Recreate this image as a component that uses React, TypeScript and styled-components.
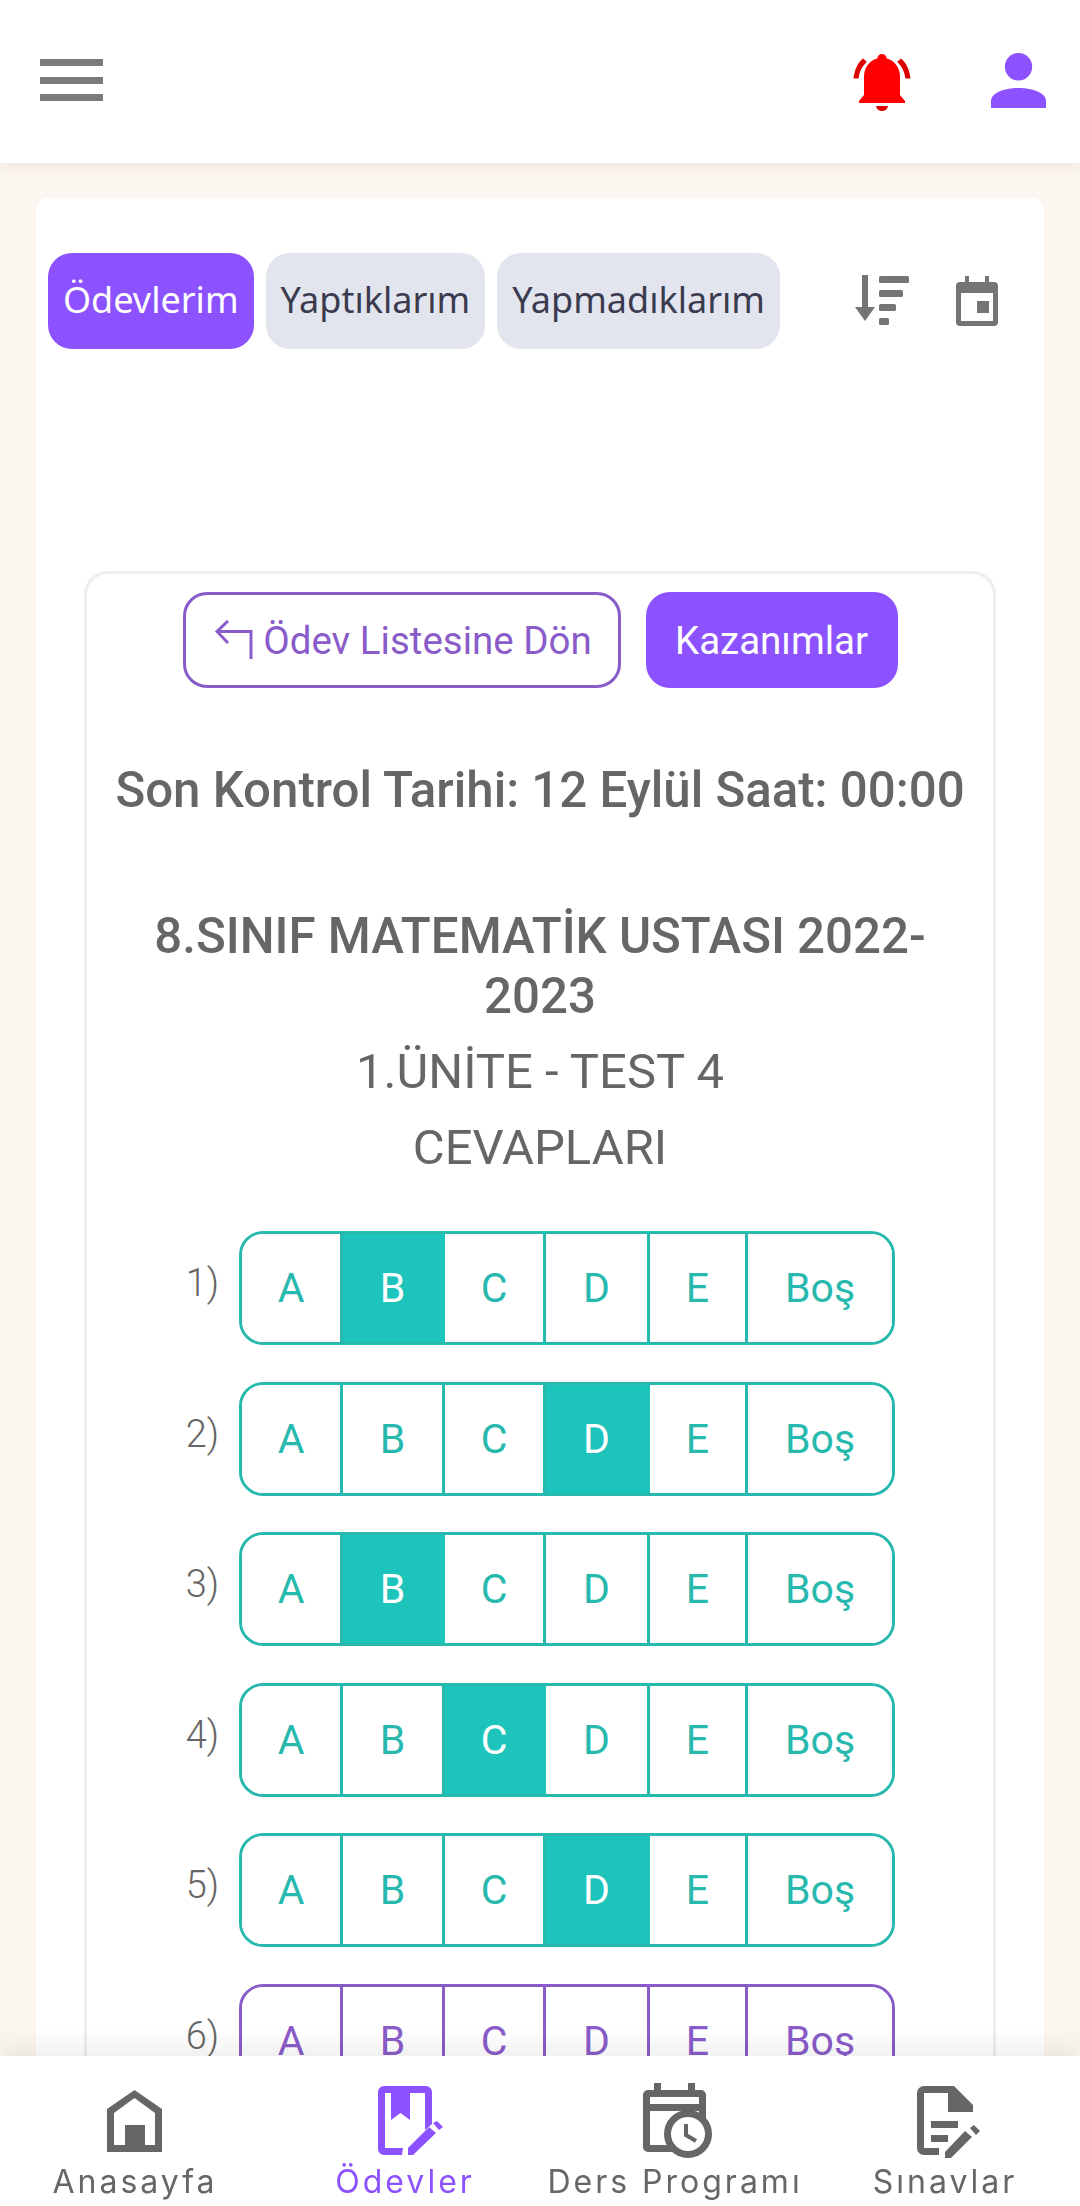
import React from 'react';
import styled, { createGlobalStyle } from 'styled-components';

const purple = '#8c52ff';
const lilac = '#8a5cc9';
const teal = '#27b8ae';
const tealFill = '#1dc4bc';
const grey = '#666666';

const GlobalStyle = createGlobalStyle`
  html, body {
    margin: 0;
    height: 2206px;
    overflow: hidden;
    background: #fcf6f0;
    font-family: Roboto, sans-serif;
  }
`;

const Page = styled.div`
  width: 1080px;
  height: 2206px;
  overflow: hidden;
`;

const Header = styled.header`
  height: 163px;
  background: #ffffff;
  box-shadow: 0 2px 14px rgba(120, 100, 80, 0.12);
  display: flex;
  align-items: center;
  justify-content: space-between;
  padding: 0 34px 0 40px;
`;

const Burger = styled.div`
  width: 63px;
  display: flex;
  flex-direction: column;
  gap: 10.5px;
  margin-bottom: 3px;
`;

const BurgerLine = styled.span`
  height: 7px;
  background: #7a7a7a;
`;

const HeaderIcons = styled.div`
  display: flex;
  align-items: center;
  gap: 75px;
  margin-bottom: 2px;
`;

const MainCard = styled.main`
  margin: 35px 36px 0;
  background: #ffffff;
  border-radius: 12px;
  padding: 55px 12px 0;
  height: 2100px;
`;

const TabBar = styled.div`
  display: flex;
  align-items: center;
  gap: 12px;
`;

const Tab = styled.div<{ $active?: boolean }>`
  box-sizing: border-box;
  height: 96px;
  padding: 0 15px 3px;
  border-radius: 24px;
  display: flex;
  align-items: center;
  font-family: 'Noto Sans', sans-serif;
  font-size: 36px;
  background: ${(p) => (p.$active ? purple : '#e3e5ee')};
  color: ${(p) => (p.$active ? '#ffffff' : '#3b3b4f')};
`;

const TabIcons = styled.div`
  display: flex;
  align-items: center;
  gap: 46px;
  margin-left: 62px;
`;

const InnerCard = styled.section`
  margin: 222px 36px 0;
  border: 3px solid #eeeeee;
  border-radius: 24px;
  padding: 18px 16px 0;
  text-align: center;
  color: ${grey};
  height: 1700px;
`;

const ButtonRow = styled.div`
  display: flex;
  justify-content: center;
  gap: 25px;
`;

const BackButton = styled.div`
  box-sizing: border-box;
  width: 438px;
  height: 96px;
  padding-left: 4px;
  border: 3px solid ${lilac};
  border-radius: 24px;
  color: ${lilac};
  font-size: 38.5px;
  display: flex;
  align-items: center;
  justify-content: center;
  gap: 10px;
`;

const GainsButton = styled.div`
  width: 252px;
  height: 96px;
  border-radius: 24px;
  background: ${purple};
  color: #ffffff;
  font-size: 38.5px;
  display: flex;
  align-items: center;
  justify-content: center;
`;

const Deadline = styled.div`
  margin-top: 72px;
  font-size: 49.2px;
  font-weight: 500;
  line-height: 60px;
`;

const BookTitle = styled.div`
  margin: 86px 40px 0;
  font-size: 49.2px;
  font-weight: 500;
  line-height: 60px;
`;

const SubTitle = styled.div`
  margin-top: 16px;
  font-size: 49px;
  line-height: 60px;
`;

const Rows = styled.div`
  margin-top: 53px;
  display: flex;
  flex-direction: column;
  gap: 36.6px;
`;

const Row = styled.div`
  display: flex;
  align-items: center;
  margin-left: 72px;
`;

const RowLabel = styled.div`
  width: 55px;
  font-size: 38px;
  font-weight: 300;
  text-align: center;
  margin-right: 9px;
  margin-bottom: 10px;
`;

const Choices = styled.div<{ $color: string }>`
  box-sizing: border-box;
  width: 656px;
  height: 114px;
  border: 3px solid ${(p) => p.$color};
  border-radius: 24px;
  overflow: hidden;
  display: flex;
  color: ${(p) => p.$color};
`;

const Choice = styled.div<{ $filled?: boolean; $width: number; $color: string; $fill: string }>`
  box-sizing: border-box;
  flex: 0 0 ${(p) => p.$width}px;
  display: flex;
  align-items: center;
  justify-content: center;
  font-size: 41px;
  border-right: 3px solid ${(p) => (p.$filled ? p.$fill : p.$color)};
  background: ${(p) => (p.$filled ? p.$fill : '#ffffff')};
  color: ${(p) => (p.$filled ? '#ffffff' : p.$color)};
  &:last-child {
    border-right: none;
  }
`;

const BottomNav = styled.nav`
  position: fixed;
  left: 0;
  right: 0;
  bottom: 0;
  height: 150px;
  background: #ffffff;
  box-shadow: 0 -10px 24px rgba(0, 0, 0, 0.07);
  display: flex;
`;

const NavItem = styled.div<{ $active?: boolean }>`
  width: 270px;
  display: flex;
  flex-direction: column;
  align-items: center;
  padding-top: 24px;
  color: ${(p) => (p.$active ? purple : grey)};
`;

const NavLabel = styled.span`
  margin-top: 2px;
  font-family: Inter, sans-serif;
  font-size: 32px;
  letter-spacing: 3px;
  line-height: 40px;
  white-space: nowrap;
`;

const Bell = () => (
  <svg width="68" height="68" viewBox="0 0 68 68" fill="#ff0000">
    <path d="M34 7c2.6 0 4.4 2 4.8 4.6C47 14 52 21 52 30v18l5 6v2H11v-2l5-6V30c0-9 5-16 13.2-18.4C29.6 9 31.4 7 34 7z" />
    <path d="M28 59h12c-.5 3.4-3 5-6 5s-5.500-1.600-6-5z" fill="#dd0000" />
    <path d="M15 11.500l3.800 3.300C14.500 19.500 11.500 24 10.600 31.500H5.500C6.500 23 9.500 16 15 11.500zM53 11.500l-3.800 3.300C53.500 19.500 56.500 24 57.400 31.500h5.100C61.500 23 58.500 16 53 11.500z" fill="#dd0000" />
  </svg>
);

const UserIcon = () => (
  <svg width="55" height="55" viewBox="0 0 55 55" fill={purple}>
    <circle cx="27.5" cy="13.700" r="13.700" />
    <path d="M0 55v-7c0-8 13-13 27.500-13S55 40 55 48v7z" />
  </svg>
);

const SortIcon = () => (
  <svg width="56" height="56" viewBox="0 0 56 56" fill="#757575">
    <rect x="8" y="2" width="6" height="36" />
    <path d="M1 34h20L11 48z" />
    <rect x="25" y="3" width="30" height="7" rx="1.500" />
    <rect x="25" y="17" width="24" height="7" rx="1.500" />
    <rect x="25" y="31" width="17" height="7" rx="1.500" />
    <rect x="25" y="45" width="10" height="7" rx="1.500" />
  </svg>
);

const CalendarIcon = () => (
  <svg width="42" height="50" viewBox="0 0 42 50" fill="#757575">
    <path d="M9 0h4v6h16V0h4v6h5a4 4 0 0 1 4 4v36a4 4 0 0 1-4 4H4a4 4 0 0 1-4-4V10a4 4 0 0 1 4-4h5zM5 17v28h32V17z" />
    <rect x="21" y="25" width="12" height="12" />
  </svg>
);

const BackArrow = () => (
  <svg width="38" height="40" viewBox="0 0 38 40" fill="none" stroke={lilac} strokeWidth="3">
    <path d="M13 1 2 11.500 13 23M2 11.500h34V39" />
  </svg>
);

const HomeIcon = () => (
  <svg width="80" height="80" viewBox="0 0 80 80" fill={grey}>
    <path d="M39.500 10 67 29v43H12V29zM39.500 18 19 33v32h11V45h20v20h10V33z" fillRule="evenodd" />
  </svg>
);

const BookIcon = () => (
  <svg width="80" height="80" viewBox="-5 0 80 80" fill={purple}>
    <path d="M14 6h42a6 6 0 0 1 6 6v32l-7 6V13H15v55h18l-1 7H14a6 6 0 0 1-6-6V12a6 6 0 0 1 6-6z" />
    <path d="M21 13h19v27l-9.500-7L21 40z" />
    <path d="M38 75v-7l21-21 7 6-23 22zM63 43l4-2 6 6-4 3z" />
  </svg>
);

const ScheduleIcon = () => (
  <svg width="80" height="80" viewBox="0 0 80 80" fill={grey}>
    <path d="M19 3h7v7h27V3h7v7h6a5 5 0 0 1 5 5v52a5 5 0 0 1-5 5H13a5 5 0 0 1-5-5V15a5 5 0 0 1 5-5h6zM15 17v7h49v-7zM15 31v34h49V31z" fillRule="evenodd" />
    <circle cx="53" cy="54" r="20.500" fill="#ffffff" stroke={grey} strokeWidth="7" />
    <path d="M51 44v11l10 6" fill="none" stroke={grey} strokeWidth="4" />
  </svg>
);

const ExamIcon = () => (
  <svg width="80" height="80" viewBox="-5 0 80 80" fill={grey}>
    <path d="M14 6h30l19 19v7H38V13H14v55h15v7H14a7 7 0 0 1-7-7V13a7 7 0 0 1 7-7z" />
    <rect x="21" y="41" width="27" height="7" />
    <rect x="21" y="55" width="17" height="7" />
    <path d="M35 78v-6l20-21 7 6-21 21zM60 48l4-3 6 6-4 4z" />
  </svg>
);

type RowData = { num: number; selected: string; color: string };

const rows: RowData[] = [
  { num: 1, selected: 'B', color: teal },
  { num: 2, selected: 'D', color: teal },
  { num: 3, selected: 'B', color: teal },
  { num: 4, selected: 'C', color: teal },
  { num: 5, selected: 'D', color: teal },
  { num: 6, selected: '', color: lilac },
];

const options = [
  { label: 'A', width: 101 },
  { label: 'B', width: 102 },
  { label: 'C', width: 101 },
  { label: 'D', width: 104 },
  { label: 'E', width: 98 },
  { label: 'Boş', width: 144 },
];

export default function App() {
  return (
    <Page>
      <GlobalStyle />
      <Header>
        <Burger>
          <BurgerLine />
          <BurgerLine />
          <BurgerLine />
        </Burger>
        <HeaderIcons>
          <Bell />
          <UserIcon />
        </HeaderIcons>
      </Header>
      <MainCard>
        <TabBar>
          <Tab $active>Ödevlerim</Tab>
          <Tab>Yaptıklarım</Tab>
          <Tab>Yapmadıklarım</Tab>
          <TabIcons>
            <SortIcon />
            <CalendarIcon />
          </TabIcons>
        </TabBar>
        <InnerCard>
          <ButtonRow>
            <BackButton>
              <BackArrow />
              Ödev Listesine Dön
            </BackButton>
            <GainsButton>Kazanımlar</GainsButton>
          </ButtonRow>
          <Deadline>Son Kontrol Tarihi: 12 Eylül Saat: 00:00</Deadline>
          <BookTitle>8.SINIF MATEMATİK USTASI 2022-2023</BookTitle>
          <SubTitle>1.ÜNİTE - TEST 4</SubTitle>
          <SubTitle>CEVAPLARI</SubTitle>
          <Rows>
            {rows.map((r) => (
              <Row key={r.num}>
                <RowLabel>{r.num})</RowLabel>
                <Choices $color={r.color}>
                  {options.map((o) => (
                    <Choice
                      key={o.label}
                      $color={r.color}
                      $fill={tealFill}
                      $filled={o.label === r.selected}
                      $width={o.width}
                    >
                      {o.label}
                    </Choice>
                  ))}
                </Choices>
              </Row>
            ))}
          </Rows>
        </InnerCard>
      </MainCard>
      <BottomNav>
        <NavItem>
          <HomeIcon />
          <NavLabel>Anasayfa</NavLabel>
        </NavItem>
        <NavItem $active>
          <BookIcon />
          <NavLabel>Ödevler</NavLabel>
        </NavItem>
        <NavItem>
          <ScheduleIcon />
          <NavLabel>Ders Programı</NavLabel>
        </NavItem>
        <NavItem>
          <ExamIcon />
          <NavLabel>Sınavlar</NavLabel>
        </NavItem>
      </BottomNav>
    </Page>
  );
}
